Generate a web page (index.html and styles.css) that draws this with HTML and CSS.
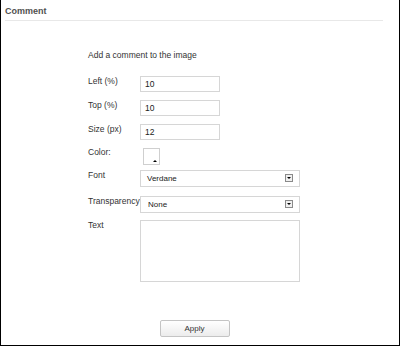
FILE: index.html
```html
<!DOCTYPE html>
<html lang="en">

<head>
  <meta charset="UTF-8">
  <title>Comment</title>
  <link rel="stylesheet" href="styles.css">
</head>

<body>

  <div class="panel">
    <!-- header -->
    <div class="panel-header">
      <h2>Comment</h2>
    </div>

    <!-- comment form -->
    <div class="comment-form">
      <p class="intro">Add a comment to the image</p>

      <div class="form-row">
        <label>Left (%)</label>
        <div class="text-input">10</div>
      </div>
      <div class="form-row">
        <label>Top (%)</label>
        <div class="text-input">10</div>
      </div>
      <div class="form-row">
        <label>Size (px)</label>
        <div class="text-input">12</div>
      </div>
      <div class="form-row row-color">
        <label>Color:</label>
        <div class="color-box"><span class="color-arrow"></span></div>
      </div>
      <div class="form-row row-font">
        <label>Font</label>
        <div class="select-box">Verdane<span class="select-arrow"></span></div>
      </div>
      <div class="form-row row-transparency">
        <label>Transparency</label>
        <div class="select-box">None<span class="select-arrow"></span></div>
      </div>
      <div class="form-row row-text">
        <label>Text</label>
        <div class="text-area"></div>
      </div>

      <div class="actions">
        <button class="apply-button">Apply</button>
      </div>
    </div>
  </div>

</body>

</html>
```

FILE: styles.css
```css
* {
  margin: 0;
  padding: 0;
  box-sizing: border-box;
}

body {
  font-family: "Liberation Sans", Arial, sans-serif;
  background-color: #ffffff;
  color: #333;
}

.panel {
  width: 400px;
  height: 346px;
  border-left: 1px solid #000;
  border-right: 1px solid #000;
  border-bottom: 1px solid #000;
}

.panel-header {
  margin: 0 16px 0 4px;
  height: 21px;
  padding-top: 6px;
  border-bottom: 1px solid #e8e8e8;
}

h2 {
  font-size: 9px;
  font-weight: bold;
  line-height: 11px;
  color: #505050;
}

.comment-form {
  width: 300px;
  padding-left: 87px;
}

.intro {
  font-size: 8.5px;
  line-height: 11px;
  margin-top: 29px;
  margin-bottom: 15px;
}

.form-row {
  display: flex;
  align-items: flex-start;
  margin-bottom: 8px;
}

.form-row label {
  width: 52px;
  font-size: 8.5px;
  line-height: 11px;
  white-space: nowrap;
}

.text-input {
  width: 80px;
  height: 16px;
  border: 1px solid #d6d6d6;
  font-size: 8.5px;
  line-height: 14px;
  padding-left: 4px;
  color: #222;
}

.row-color {
  margin-top: 2px;
  margin-bottom: 5px;
}

.row-color label {
  margin-top: -1px;
}

.color-box {
  position: relative;
  width: 17px;
  height: 17px;
  margin-left: 3px;
  border: 1px solid #cfcfcf;
}

.color-arrow {
  position: absolute;
  right: 2px;
  bottom: 2px;
  border-left: 2px solid transparent;
  border-right: 2px solid transparent;
  border-bottom: 2px solid #000;
}

.select-box {
  position: relative;
  width: 160px;
  height: 17px;
  border: 1px solid #d6d6d6;
  font-size: 8px;
  line-height: 15px;
  padding-left: 6px;
  color: #222;
}

.row-font {
  margin-bottom: 9px;
}

.row-transparency {
  margin-bottom: 7px;
}

.row-transparency .select-box {
  padding-left: 7px;
}

.select-arrow {
  position: absolute;
  right: 6px;
  top: 3px;
  width: 8px;
  height: 8px;
  border: 1px solid #8a8a8a;
  background-color: #f0f0f0;
}

.select-arrow::after {
  content: "";
  position: absolute;
  left: 1px;
  top: 2px;
  border-left: 2px solid transparent;
  border-right: 2px solid transparent;
  border-top: 2px solid #000;
}

.text-area {
  width: 160px;
  height: 62px;
  border: 1px solid #d6d6d6;
}

.actions {
  width: 213px;
  text-align: center;
  margin-top: 35px;
}

.apply-button {
  width: 70px;
  height: 17px;
  font-family: "Liberation Sans", Arial, sans-serif;
  font-size: 8px;
  color: #333;
  border: 1px solid #c4c4c4;
  border-radius: 2px;
  background: linear-gradient(#ffffff, #ececec);
}
```
